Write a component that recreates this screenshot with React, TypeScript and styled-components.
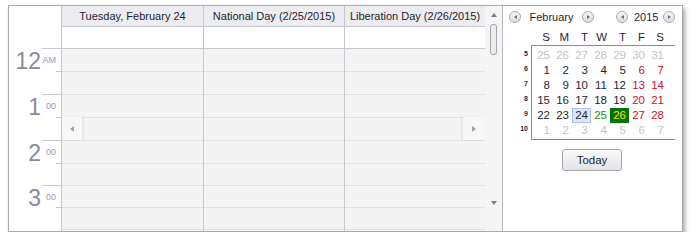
import React from "react";
import styled, { createGlobalStyle } from "styled-components";

const GlobalStyle = createGlobalStyle`
    * { box-sizing: border-box; }
    body {
        margin: 0;
        background: #fff;
        font-family: "Liberation Sans", Arial, sans-serif;
    }
`;

const SLOT_HEIGHTS = [23, 23, 23, 23, 23, 22, 22, 22];
const HOURS = [
    { hour: "12", suffix: "AM" },
    { hour: "1", suffix: "00" },
    { hour: "2", suffix: "00" },
    { hour: "3", suffix: "00" },
];
const COLUMNS = [
    { title: "Tuesday, February 24", width: 142 },
    { title: "National Day (2/25/2015)", width: 141 },
    { title: "Liberation Day (2/26/2015)", width: 141 },
];

const Page = styled.div`
    padding: 5px 0 0 8px;
`;

const Frame = styled.div`
    display: flex;
    width: 675px;
    height: 227px;
    border: 1px solid #a9a9b1;
    background: #fff;
    box-shadow: 2px 3px 4px rgba(0, 0, 0, 0.35);
`;

const Scheduler = styled.div`
    display: flex;
    border-right: 1px solid #b9b9c2;
`;

const Ruler = styled.div`
    display: flex;
    flex-direction: column;
    width: 52px;
    background: #fff;
`;

const RulerTop = styled.div`
    height: 42px;
`;

const HourBlock = styled.div`
    display: grid;
    grid-template-columns: 33px 19px;
`;

const HourDigits = styled.div`
    padding: 2px 1px 0 0;
    text-align: right;
    font-size: 23px;
    line-height: 1;
    color: #8b8b9b;
`;

const HourSide = styled.div`
    display: flex;
    flex-direction: column;
    border-top: 1px solid #c9c9d3;
`;

const HalfSide = styled.div<{ $h: number }>`
    height: ${({ $h }) => $h - 1}px;
    padding: 7px 5px 0 0;
    text-align: right;
    font-size: 9px;
    line-height: 1;
    color: #9a9aaa;
`;

const Tick = styled.div`
    align-self: flex-end;
    width: 5px;
    height: 1px;
    background: #c9c9d3;
`;

const DaysArea = styled.div`
    position: relative;
    display: flex;
`;

const DayColumn = styled.div<{ $w: number }>`
    display: flex;
    flex-direction: column;
    width: ${({ $w }) => $w}px;
    border-left: 1px solid #c6c6d0;
    background: #f4f4f4;
`;

const DayHeader = styled.div`
    display: flex;
    align-items: center;
    justify-content: center;
    height: 21px;
    padding-bottom: 1px;
    border-bottom: 1px solid #c9c9d3;
    background: #ededf1;
    font-size: 11px;
    color: #1c1c30;
    white-space: nowrap;
`;

const AllDayCell = styled.div`
    height: 22px;
    border-bottom: 1px solid #c9c9d3;
    background: #fff;
`;

const Slot = styled.div<{ $h: number }>`
    height: ${({ $h }) => $h}px;
    border-bottom: 1px solid #e0e0e3;
`;

const NavButton = styled.div<{ $side: "left" | "right" }>`
    position: absolute;
    top: 111px;
    ${({ $side }) => $side === "left" ? `
        left: 1px;
        width: 20px;
        box-shadow: 2px 0 2px rgba(0, 0, 0, 0.06);
    ` : `
        right: 0;
        width: 22px;
        box-shadow: -2px 0 2px rgba(0, 0, 0, 0.06);
    `}
    height: 23px;
    display: flex;
    align-items: center;
    justify-content: center;
    background: #f7f7f7;
`;

const Triangle = styled.span<{ $dir: "left" | "right" | "up" | "down"; $c: string; $s?: number }>`
    width: 0;
    height: 0;
    ${({ $dir, $c, $s = 4 }) => {
        const half = $s - 1;
        if ($dir === "left") return `border-top: ${half}px solid transparent; border-bottom: ${half}px solid transparent; border-right: ${$s}px solid ${$c};`;
        if ($dir === "right") return `border-top: ${half}px solid transparent; border-bottom: ${half}px solid transparent; border-left: ${$s}px solid ${$c};`;
        if ($dir === "up") return `border-left: ${half}px solid transparent; border-right: ${half}px solid transparent; border-bottom: ${$s}px solid ${$c};`;
        return `border-left: ${half}px solid transparent; border-right: ${half}px solid transparent; border-top: ${$s}px solid ${$c};`;
    }}
`;

const ScrollBar = styled.div`
    display: flex;
    flex-direction: column;
    align-items: center;
    width: 17px;
    padding: 7px 0 8px;
    background: #f5f5f6;
`;

const Thumb = styled.div`
    width: 7px;
    height: 31px;
    margin-top: 7px;
    border: 1px solid #a4a4ac;
    border-radius: 3px;
    background: #ececee;
`;

const ScrollEnd = styled.div`
    margin-top: auto;
`;

const CalendarPanel = styled.div`
    display: flex;
    flex-direction: column;
    width: 179px;
    padding: 5px 7px 0 6px;
    background: #fff;
    color: #1f1f33;
`;

const CalHeader = styled.div`
    display: flex;
    justify-content: space-between;
    align-items: center;
    height: 12px;
`;

const NavGroup = styled.div<{ $gap: number }>`
    display: flex;
    align-items: center;
    gap: ${({ $gap }) => $gap}px;
`;

const RoundArrow = styled.div`
    display: flex;
    align-items: center;
    justify-content: center;
    width: 12px;
    height: 12px;
    border: 1px solid #a9a9b1;
    border-radius: 50%;
    background: linear-gradient(#f8f8f8, #dcdce0);
`;

const NavLabel = styled.div<{ $w: number }>`
    width: ${({ $w }) => $w}px;
    text-align: center;
    font-size: 11px;
    line-height: 12px;
    white-space: nowrap;
`;

const MonthGrid = styled.div`
    display: grid;
    grid-template-columns: 22px auto;
    margin-top: 6px;
`;

const DowRow = styled.div`
    display: grid;
    grid-template-columns: repeat(7, 19px);
    height: 16px;
    padding-left: 3px;
`;

const DowCell = styled.div`
    padding-right: 3px;
    text-align: right;
    font-size: 11.5px;
    line-height: 16px;
`;

const WeekCol = styled.div`
    display: grid;
    grid-template-rows: repeat(6, 15px);
    padding-top: 2px;
`;

const WeekNum = styled.div`
    padding-right: 3px;
    text-align: right;
    font-size: 7px;
    font-weight: 700;
    line-height: 13px;
    color: #2a2a3a;
`;

const DaysBox = styled.div`
    display: grid;
    grid-template-columns: repeat(7, 19px);
    grid-template-rows: repeat(6, 15px);
    padding: 2px 0 1px 2px;
    border-top: 1px solid #8686b4;
    border-left: 1px solid #8686b4;
    border-bottom: 1px solid #8686b4;
`;

type DayKind = "other" | "normal" | "weekend" | "holiday" | "special" | "selected";

const DAY_STYLES: Record<DayKind, string> = {
    other: "color: #c4c4c8;",
    normal: "color: #1f1f33;",
    weekend: "color: #cc1030;",
    holiday: "color: #1e8c1e;",
    special: "color: #f0e428; background: #007400;",
    selected: "color: #1f1f33; background: #dde6f6; box-shadow: inset 0 0 0 1px #a9c0e9;",
};

const DayCell = styled.div<{ $kind: DayKind }>`
    padding-right: 3px;
    text-align: right;
    font-size: 11.5px;
    line-height: 15px;
    ${({ $kind }) => DAY_STYLES[$kind]}
`;

const TodayButton = styled.button`
    align-self: center;
    width: 60px;
    height: 22px;
    margin-top: 9px;
    padding: 0;
    border: 1px solid #a6a6ae;
    border-radius: 3px;
    background: linear-gradient(#fbfbfb, #e3e3e8);
    font-family: inherit;
    font-size: 11.5px;
    color: #1f1f33;
`;

const buildDays = () => {
    const days: { label: number; kind: DayKind }[] = [];
    for (let i = 25; i <= 31; i++) days.push({ label: i, kind: "other" });
    for (let d = 1; d <= 28; d++) {
        const col = days.length % 7;
        let kind: DayKind = col >= 5 ? "weekend" : "normal";
        if (d === 24) kind = "selected";
        if (d === 25) kind = "holiday";
        if (d === 26) kind = "special";
        days.push({ label: d, kind });
    }
    for (let i = 1; i <= 7; i++) days.push({ label: i, kind: "other" });
    return days;
};

const App: React.FC = () => {
    const days = buildDays();
    return (
        <Page>
            <GlobalStyle />
            <Frame>
                <Scheduler>
                    <Ruler>
                        <RulerTop />
                        {HOURS.map((h, i) => (
                            <HourBlock key={h.hour}>
                                <HourDigits>{h.hour}</HourDigits>
                                <HourSide>
                                    <HalfSide $h={SLOT_HEIGHTS[i * 2]}>{h.suffix}</HalfSide>
                                    <Tick />
                                    <HalfSide $h={SLOT_HEIGHTS[i * 2 + 1]} />
                                </HourSide>
                            </HourBlock>
                        ))}
                    </Ruler>
                    <DaysArea>
                        {COLUMNS.map((c) => (
                            <DayColumn key={c.title} $w={c.width}>
                                <DayHeader>{c.title}</DayHeader>
                                <AllDayCell />
                                {SLOT_HEIGHTS.map((h, i) => (
                                    <Slot key={i} $h={h} />
                                ))}
                            </DayColumn>
                        ))}
                        <NavButton $side="left">
                            <Triangle $dir="left" $c="#a4a4ae" />
                        </NavButton>
                        <NavButton $side="right">
                            <Triangle $dir="right" $c="#a4a4ae" />
                        </NavButton>
                    </DaysArea>
                    <ScrollBar>
                        <Triangle $dir="up" $c="#7c7c88" />
                        <Thumb />
                        <ScrollEnd>
                            <Triangle $dir="down" $c="#7c7c88" />
                        </ScrollEnd>
                    </ScrollBar>
                </Scheduler>
                <CalendarPanel>
                    <CalHeader>
                        <NavGroup $gap={8}>
                            <RoundArrow><Triangle $dir="left" $c="#6e6e78" $s={3} /></RoundArrow>
                            <NavLabel $w={45}>February</NavLabel>
                            <RoundArrow><Triangle $dir="right" $c="#6e6e78" $s={3} /></RoundArrow>
                        </NavGroup>
                        <NavGroup $gap={6}>
                            <RoundArrow><Triangle $dir="left" $c="#6e6e78" $s={3} /></RoundArrow>
                            <NavLabel $w={23}>2015</NavLabel>
                            <RoundArrow><Triangle $dir="right" $c="#6e6e78" $s={3} /></RoundArrow>
                        </NavGroup>
                    </CalHeader>
                    <MonthGrid>
                        <div />
                        <DowRow>
                            {["S", "M", "T", "W", "T", "F", "S"].map((d, i) => (
                                <DowCell key={i}>{d}</DowCell>
                            ))}
                        </DowRow>
                        <WeekCol>
                            {[5, 6, 7, 8, 9, 10].map((w) => (
                                <WeekNum key={w}>{w}</WeekNum>
                            ))}
                        </WeekCol>
                        <DaysBox>
                            {days.map((d, i) => (
                                <DayCell key={i} $kind={d.kind}>{d.label}</DayCell>
                            ))}
                        </DaysBox>
                    </MonthGrid>
                    <TodayButton>Today</TodayButton>
                </CalendarPanel>
            </Frame>
        </Page>
    );
};

export default App;
